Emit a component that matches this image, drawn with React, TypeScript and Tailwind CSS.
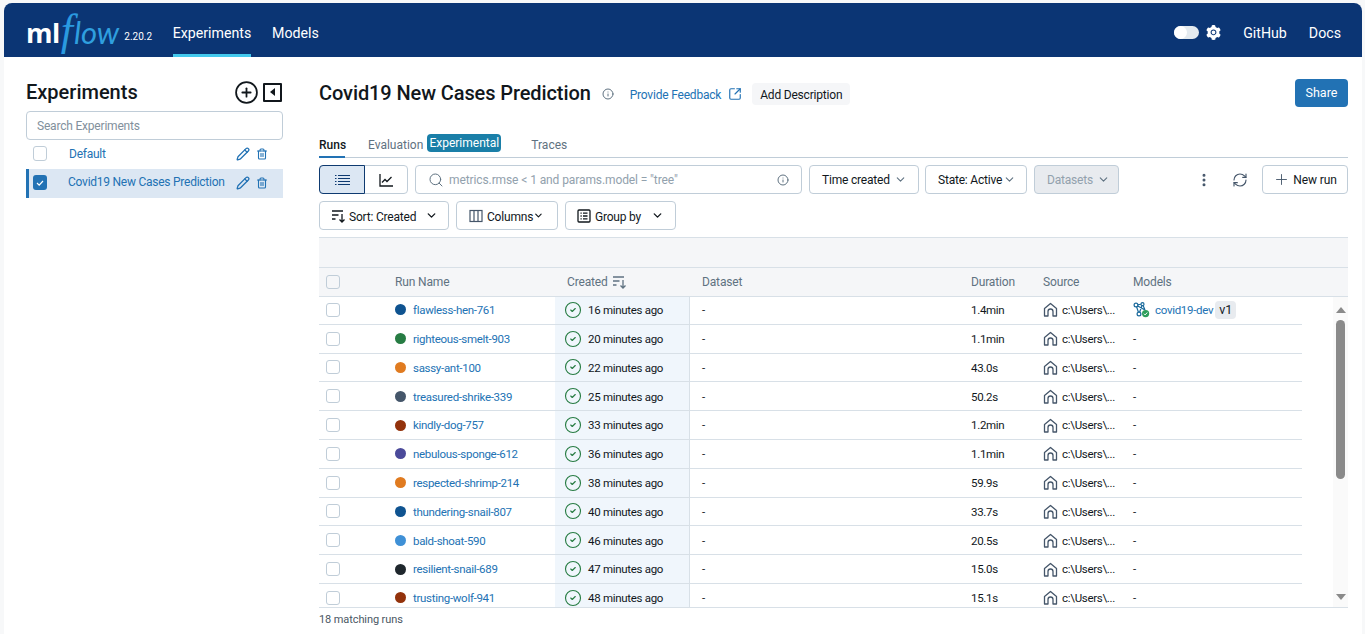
import {
  ChevronDown,
  CircleCheck,
  CirclePlus,
  EllipsisVertical,
  Info,
  Pencil,
  Plus,
  RefreshCw,
  Search,
  SquareArrowOutUpRight,
  Trash2,
} from "lucide-react";
import { AiFillSetting } from "react-icons/ai";

const runs = [
  { name: "flawless-hen-761", color: "bg-[#0f5390]", ago: "16 minutes ago", duration: "1.4min" },
  { name: "righteous-smelt-903", color: "bg-[#277c43]", ago: "20 minutes ago", duration: "1.1min" },
  { name: "sassy-ant-100", color: "bg-[#e07b20]", ago: "22 minutes ago", duration: "43.0s" },
  { name: "treasured-shrike-339", color: "bg-[#45566a]", ago: "25 minutes ago", duration: "50.2s" },
  { name: "kindly-dog-757", color: "bg-[#93320b]", ago: "33 minutes ago", duration: "1.2min" },
  { name: "nebulous-sponge-612", color: "bg-[#4b4a9a]", ago: "36 minutes ago", duration: "1.1min" },
  { name: "respected-shrimp-214", color: "bg-[#e07b20]", ago: "38 minutes ago", duration: "59.9s" },
  { name: "thundering-snail-807", color: "bg-[#0f5390]", ago: "40 minutes ago", duration: "33.7s" },
  { name: "bald-shoat-590", color: "bg-[#3f90d6]", ago: "46 minutes ago", duration: "20.5s" },
  { name: "resilient-snail-689", color: "bg-[#1f272d]", ago: "47 minutes ago", duration: "15.0s" },
  { name: "trusting-wolf-941", color: "bg-[#93320b]", ago: "48 minutes ago", duration: "15.1s" },
];

const HomeIcon = () => (
  <svg width="15" height="15" viewBox="0 0 15 15" fill="none" stroke="#45566a" strokeWidth="1.3" className="shrink-0">
    <path d="M1.5 6.5 7.5 1.5l6 5V14h-3.5V9.5a2.5 2.5 0 0 0-5 0V14H1.5z" strokeLinejoin="round" />
  </svg>
);

const SortIcon = () => (
  <svg width="15" height="14" viewBox="0 0 15 14" fill="none" stroke="currentColor" strokeWidth="1.3" className="shrink-0">
    <path d="M1 2h11M1 6h6.5M1 10h3.5M11 5v8M8.5 10.5 11 13l2.5-2.5" />
  </svg>
);

const ColumnsIcon = () => (
  <svg width="14" height="14" viewBox="0 0 14 14" fill="none" stroke="#45566a" strokeWidth="1.2" className="shrink-0">
    <rect x="1" y="1.5" width="12" height="11" />
    <path d="M5 1.5v11M9 1.5v11" />
  </svg>
);

const GroupIcon = () => (
  <svg width="14" height="14" viewBox="0 0 14 14" fill="none" stroke="currentColor" strokeWidth="1.3" className="shrink-0">
    <rect x="1" y="1" width="12" height="12" rx="1" />
    <path d="M3.5 4.2h1.2M6 4.2h4.5M3.5 7h1.2M6 7h4.5M3.5 9.8h1.2M6 9.8h4.5" />
  </svg>
);

const ListIcon = () => (
  <svg width="15" height="12" viewBox="0 0 15 12" fill="none" stroke="#0e3a70" strokeWidth="1.2" className="shrink-0">
    <path d="M0 1.5h1.5M3 1.5h12M0 4.5h1.5M3 4.5h12M0 7.5h1.5M3 7.5h12M0 10.5h1.5M3 10.5h12" />
  </svg>
);

const ChartIcon = () => (
  <svg width="14" height="14" viewBox="0 0 14 14" fill="none" stroke="#11171c" strokeWidth="1.3" className="shrink-0">
    <path d="M1 1v12h13" />
    <path d="m3 9.5 3-3 2 2 4.5-4.5" />
  </svg>
);

const ModelIcon = () => (
  <svg width="17" height="16" viewBox="0 0 17 16" fill="none" className="shrink-0">
    <g stroke="#1b6a9c" strokeWidth="1.2">
      <path d="M3 3 9.5 2M3 3l3 9M9.5 2 6 12M9.5 2l2.5 6M3 3l9 5" />
      <circle cx="3" cy="3" r="1.9" fill="#fff" />
      <circle cx="9.5" cy="2.2" r="1.5" fill="#fff" />
      <circle cx="6" cy="12" r="1.9" fill="#fff" />
    </g>
    <circle cx="12.6" cy="11.6" r="3.6" fill="#2e9e5b" />
    <path d="m10.9 11.7 1.2 1.2 2.2-2.4" stroke="#fff" strokeWidth="1" />
  </svg>
);

const ToolButton = ({ label, className, disabled }: { label: string; className: string; disabled?: boolean }) => (
  <button
    className={`flex h-[29px] items-center justify-between whitespace-nowrap rounded border border-[#c0cdd8] pl-3 text-[12px] tracking-[-0.2px] ${
      disabled ? "bg-[#e8ebef] text-[#92a1ad]" : "bg-white text-[#11171c]"
    } ${className}`}
  >
    {label}
    <ChevronDown size={13} className="text-[#5f7281]" />
  </button>
);

const Header = () => (
  <header className="flex h-[54px] items-stretch rounded-t-lg bg-[#0b3574] pl-[22px] pr-[21px] text-white">
    <div className="flex w-[147px] items-center">
      <span className="mt-[5px] font-['Open_Sans'] text-[27px] font-bold leading-none tracking-[-0.5px]">ml</span>
      <span className="mt-[1px] ml-[1px] font-['Liberation_Serif'] text-[44px] italic leading-none text-[#2a9ae0]">f</span>
      <span className="mt-[5px] ml-[1px] font-['Lato'] text-[31px] font-normal italic leading-none text-[#2f9fdf]">low</span>
      <span className="mt-[13px] ml-[5px] text-[10px]">2.20.2</span>
    </div>
    <div className="flex h-full w-[78px] items-center justify-center border-b-[3px] border-[#43c9ed] pt-[10px] text-[14.2px]">Experiments</div>
    <div className="ml-[21px] flex items-center pt-[8px] text-[14.2px]">Models</div>
    <div className="ml-auto flex items-center">
      <div className="mt-[4px] flex h-[13px] w-[25px] items-center rounded-full bg-[#e4eaef]">
        <div className="h-[13px] w-[13px] rounded-full bg-white" />
      </div>
      <AiFillSetting size={17} className="ml-[6px] mt-[5px]" />
      <span className="ml-[21px] pt-[8px] text-[14.2px]">GitHub</span>
      <span className="ml-[22px] pt-[8px] text-[14.2px]">Docs</span>
    </div>
  </header>
);

const Sidebar = () => (
  <aside className="w-[289px] shrink-0 pl-[22px] pr-[10px]">
    <div className="flex h-[54px] items-center justify-between pt-[16px]">
      <h2 className="text-[20px] font-medium text-[#11171c]">Experiments</h2>
      <div className="flex items-center pr-[1px]">
        <CirclePlus size={25} strokeWidth={1.7} className="text-[#11171c]" />
        <div className="ml-[4px] flex h-[19px] w-[19px] items-center justify-center rounded-[1px] border-2 border-[#11171c]">
          <div className="h-0 w-0 border-y-[4px] border-r-[5px] border-y-transparent border-r-[#11171c]" />
        </div>
      </div>
    </div>
    <div className="flex h-[29px] items-center rounded border border-[#c0cdd8] px-[10px] pt-[1px] text-[12px] tracking-[-0.2px] text-[#82909c]">Search Experiments</div>
    <div className="flex h-[29px] items-center pb-[2px] pl-[7px] text-[12px] tracking-[-0.25px] text-[#2272b4]">
      <div className="h-[15px] w-[14px] rounded-[3px] border border-[#c0cdd8]" />
      <span className="ml-[22px]">Default</span>
      <Pencil size={14} strokeWidth={2.2} className="ml-auto" />
      <Trash2 size={12} strokeWidth={2.2} className="ml-[6px] mr-[15px]" />
    </div>
    <div className="flex h-[29px] items-center border-l-[3px] border-[#2272b4] bg-[#dce7f3] pb-[2px] pl-[4px] text-[12px] tracking-[-0.25px] text-[#2272b4]">
      <div className="flex h-[15px] w-[14px] items-center justify-center rounded-[3px] bg-[#2272b4]">
        <svg width="10" height="10" viewBox="0 0 10 10" fill="none" stroke="#fff" strokeWidth="1.2">
          <path d="m2 5 2.2 2.2L8 3" />
        </svg>
      </div>
      <span className="-mt-[1px] ml-[21px] whitespace-nowrap">Covid19 New Cases Prediction</span>
      <Pencil size={14} strokeWidth={2.2} className="ml-auto" />
      <Trash2 size={12} strokeWidth={2.2} className="ml-[6px] mr-[15px]" />
    </div>
  </aside>
);

const RunRow = ({ run, index }: { run: (typeof runs)[number]; index: number }) => (
  <div className="flex h-[28.8px] shrink-0 items-center border-b border-[#d8e0e7] text-[11.5px] tracking-[-0.3px] text-[#11171c] first:mt-[-1px]">
    <div className="flex w-[76px] items-center pl-[7px]">
      <div className="h-[14px] w-[14px] rounded-[3px] border border-[#c0cdd8]" />
    </div>
    <div className="flex w-[160px] items-center">
      <div className={`h-[11px] w-[11px] rounded-full ${run.color}`} />
      <span className="ml-[7px] whitespace-nowrap pt-[2px] text-[#2272b4]">{run.name}</span>
    </div>
    <div className="flex h-full w-[135px] items-center border-r border-[#d8e0e7] bg-[#f0f6fc] pl-[9px]">
      <CircleCheck size={18} strokeWidth={1.5} className="text-[#277c43]" />
      <span className="ml-[6px] whitespace-nowrap pt-[2px]">{run.ago}</span>
    </div>
    <div className="w-[281px] pl-[12px] pt-[2px]">-</div>
    <div className="w-[72px] pt-[2px]">{run.duration}</div>
    <div className="flex w-[90px] items-center">
      <HomeIcon />
      <span className="ml-[4px] whitespace-nowrap pt-[2px]">c:\Users\...</span>
    </div>
    {index === 0 ? (
      <div className="flex items-center">
        <ModelIcon />
        <span className="ml-[5px] pt-[2px] text-[#2272b4]">covid19-dev</span>
        <span className="ml-[2px] rounded bg-[#e8ebef] px-[4px] py-[1px] text-[12.5px] leading-[16px] tracking-normal">v1</span>
      </div>
    ) : (
      <div className="pt-[2px]">-</div>
    )}
  </div>
);

const RunsTable = () => (
  <div className="mt-[7px] border-y border-[#d8e0e7]">
    <div className="h-[30px] border-b border-[#d8e0e7] bg-[#f5f6f8]" />
    <div className="flex h-[29px] items-center border-b border-[#d8e0e7] bg-[#f5f6f8] text-[12px] tracking-[-0.15px] text-[#5f7281]">
      <div className="flex w-[76px] items-center pl-[7px]">
        <div className="h-[14px] w-[14px] rounded-[3px] border border-[#c0cdd8]" />
      </div>
      <div className="w-[172px]">Run Name</div>
      <div className="flex w-[135px] items-center">
        Created
        <span className="ml-[4px]">
          <SortIcon />
        </span>
      </div>
      <div className="w-[269px]">Dataset</div>
      <div className="w-[72px]">Duration</div>
      <div className="w-[90px]">Source</div>
      <div>Models</div>
    </div>
    <div className="flex h-[310px]">
      <div className="flex w-[983px] flex-col overflow-hidden">
        {runs.map((run, index) => (
          <RunRow key={run.name} run={run} index={index} />
        ))}
      </div>
      <div className="ml-auto flex w-[15px] flex-col items-center bg-[#fafafa] px-[3px] pt-[10px]">
        <div className="h-0 w-0 border-x-[5px] border-b-[6px] border-x-transparent border-b-[#8a8a8a]" />
        <div className="mt-[7px] h-[159px] w-[9px] shrink-0 rounded-full bg-[#8a8a8a]" />
        <div className="mt-auto mb-[7px] h-0 w-0 border-x-[5px] border-t-[6px] border-x-transparent border-t-[#8a8a8a]" />
      </div>
    </div>
  </div>
);

const Main = () => (
  <main className="min-w-0 flex-1 pl-[26px] pr-[14px]">
    <div className="flex h-[50px] items-end justify-between">
      <div className="flex items-center">
        <h1 className="-mt-[2px] text-[20px] font-medium leading-[28px] tracking-[-0.1px] text-[#11171c]">Covid19 New Cases Prediction</h1>
        <Info size={12} className="ml-[11px] text-[#5f7281]" />
        <span className="ml-[16px] pt-[2px] text-[12px] tracking-[-0.2px] text-[#2272b4]">Provide Feedback</span>
        <SquareArrowOutUpRight size={14} className="ml-[7px] text-[#2272b4]" />
        <span className="ml-[10px] flex h-[22px] items-center rounded bg-[#f5f6f8] px-[8px] pt-[1px] text-[12px] tracking-[-0.2px] text-[#11171c]">Add Description</span>
      </div>
      <button className="flex h-[28px] w-[53px] items-center justify-center rounded bg-[#2272b4] text-[12.5px] text-white">Share</button>
    </div>
    <div className="mt-[27px] flex h-[24px] items-start border-b border-[#c0cdd8] text-[12px] text-[#5f7281]">
      <div className="h-[24px] w-[26px] border-b-2 border-[#2272b4] pt-[2px] font-medium text-[#11171c]">Runs</div>
      <div className="ml-[23px] pt-[2px]">Evaluation</div>
      <div className="ml-[4px] flex h-[18px] w-[74px] items-center justify-center rounded bg-[#1a7fa8] text-white">Experimental</div>
      <div className="ml-[30px] pt-[2px]">Traces</div>
    </div>
    <div className="mt-[7px] flex items-center">
      <div className="flex h-[29px] w-[89px] rounded border border-[#c0cdd8]">
        <div className="-m-px flex w-[46px] items-center justify-center rounded-l border border-[#0e3a70] bg-[#dce7f3]">
          <ListIcon />
        </div>
        <div className="flex flex-1 items-center justify-center">
          <ChartIcon />
        </div>
      </div>
      <div className="ml-[7px] flex h-[29px] w-[387px] items-center rounded border border-[#c0cdd8] pl-[12px] pr-[12px] text-[12px] tracking-[-0.1px] text-[#92a1ad]">
        <Search size={16} strokeWidth={1.5} className="text-[#5f7281]" />
        <span className="ml-[5px] whitespace-nowrap">metrics.rmse &lt; 1 and params.model = "tree"</span>
        <Info size={12} className="ml-auto text-[#5f7281]" />
      </div>
      <ToolButton label="Time created" className="ml-[7px] w-[110px] pr-[11px]" />
      <ToolButton label="State: Active" className="ml-[6px] w-[102px] pr-[10px]" />
      <ToolButton label="Datasets" className="ml-[7px] w-[85px] pr-[8px]" disabled />
      <EllipsisVertical size={16} strokeWidth={2.5} className="ml-[77px] text-[#45566a]" />
      <RefreshCw size={16} strokeWidth={1.7} className="ml-[20px] text-[#45566a]" />
      <button className="ml-auto flex h-[29px] w-[86px] items-center justify-center whitespace-nowrap rounded border border-[#c0cdd8] text-[12px] tracking-[-0.1px] text-[#11171c]">
        <Plus size={17} strokeWidth={1.3} className="mr-[3px] text-[#45566a]" />
        New run
      </button>
    </div>
    <div className="mt-[7px] flex items-center whitespace-nowrap text-[12px] tracking-[-0.2px] text-[#11171c]">
      <button className="flex h-[29px] w-[130px] items-center rounded border border-[#c0cdd8] pl-[11px] pr-[10px]">
        <SortIcon />
        <span className="ml-[3px] pt-[2px]">Sort: Created</span>
        <ChevronDown size={13} strokeWidth={2.5} className="ml-auto" />
      </button>
      <button className="ml-[7px] flex h-[29px] w-[102px] items-center rounded border border-[#c0cdd8] pl-[12px] pr-[13px]">
        <ColumnsIcon />
        <span className="ml-[4px] pt-[2px]">Columns</span>
        <ChevronDown size={13} strokeWidth={2.5} className="ml-auto" />
      </button>
      <button className="ml-[7px] flex h-[29px] w-[111px] items-center rounded border border-[#c0cdd8] pl-[11px] pr-[11px]">
        <GroupIcon />
        <span className="ml-[4px] pt-[2px]">Group by</span>
        <ChevronDown size={13} strokeWidth={2.5} className="ml-auto" />
      </button>
    </div>
    <RunsTable />
    <div className="mt-[4px] text-[11px] tracking-[-0.1px] text-[#4a5864]">18 matching runs</div>
  </main>
);

export default function App() {
  return (
    <div className="h-[634px] w-[1365px] overflow-hidden bg-[#f7f8f9] pl-1 pr-[3px] pt-[3px] font-['Roboto',sans-serif]">
      <div className="h-full rounded-t-lg bg-white">
        <Header />
        <div className="flex">
          <Sidebar />
          <Main />
        </div>
      </div>
    </div>
  );
}
